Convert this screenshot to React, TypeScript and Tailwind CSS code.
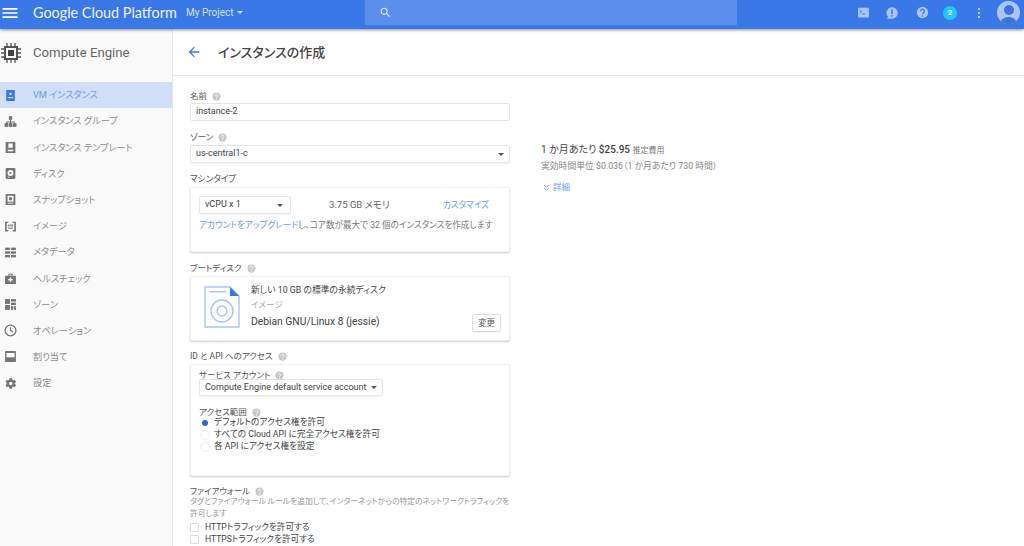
import React from "react";

const font = "font-['Roboto','Noto_Sans_CJK_JP',sans-serif] [font-feature-settings:'palt']";

function Help({ className = "" }: { className?: string }) {
  return (
    <svg viewBox="0 0 24 24" className={`w-[9px] h-[9px] shrink-0 ${className}`}>
      <circle cx="12" cy="12" r="11" fill="#c8c8c8" />
      <path d="M8.5 9.5a3.5 3.5 0 1 1 5.5 2.9c-1.2.8-2 1.4-2 2.8" fill="none" stroke="#fff" strokeWidth="2.4" />
      <circle cx="12" cy="18.5" r="1.5" fill="#fff" />
    </svg>
  );
}

function Caret({ className = "" }: { className?: string }) {
  return <span className={`w-0 h-0 border-x-[3.5px] border-x-transparent border-t-[3.5px] border-t-[#555] ${className}`} />;
}

const G = "#757575";
const navIcons: React.ReactNode[] = [
  <g key="a"><path d="M5 2h14a1 1 0 0 1 1 1v18a1 1 0 0 1-1 1H5a1 1 0 0 1-1-1V3a1 1 0 0 1 1-1z" fill="#3b78e7" /><rect x="10" y="7" width="4" height="4" fill="#d0dff7" /><rect x="7" y="15" width="10" height="2" fill="#d0dff7" /></g>,
  <g key="b" fill={G}><rect x="9" y="2" width="6" height="7" /><rect x="1" y="15" width="7" height="7" /><rect x="9" y="15" width="6" height="7" /><rect x="16" y="15" width="7" height="7" /><path d="M11 9h2v3h7v3h-2v-1h-5v1h-2v-1H6v1H4v-3h7z" /></g>,
  <g key="c"><rect x="3" y="2" width="18" height="20" rx="1" fill={G} /><rect x="8" y="4.5" width="8" height="8" fill="#fafafa" /><rect x="7" y="16" width="10" height="3" fill="#fafafa" /></g>,
  <g key="d"><rect x="3" y="2" width="18" height="20" rx="2" fill={G} /><circle cx="12" cy="11" r="5.5" fill="#fafafa" /><circle cx="12" cy="11" r="2" fill={G} /><rect x="7" y="18" width="3" height="1.5" fill="#fafafa" /></g>,
  <g key="e"><rect x="3" y="2" width="18" height="20" rx="1" fill={G} /><rect x="6.5" y="5" width="11" height="11" fill="#fafafa" /><circle cx="12" cy="10.5" r="3.2" fill={G} /><rect x="7" y="18" width="10" height="1.5" fill="#fafafa" /></g>,
  <g key="f" fill={G}><path d="M2 3h6v2.5H5v13h3V21H2zM16 3h6v18h-6v-2.5h3v-13h-3z" /><rect x="7" y="8.5" width="3" height="3" /><rect x="10.5" y="8.5" width="3" height="3" /><rect x="14" y="8.5" width="3" height="3" /><rect x="7.5" y="14" width="9" height="2" /></g>,
  <g key="g" fill={G}><rect x="2" y="3" width="9" height="4.5" /><rect x="13" y="3" width="9" height="4.5" /><rect x="2" y="9.8" width="9" height="4.5" /><rect x="13" y="9.8" width="9" height="4.5" /><rect x="2" y="16.5" width="9" height="4.5" /><rect x="13" y="16.5" width="9" height="4.5" /></g>,
  <g key="h"><path d="M8 7V3h8v4h6v15H2V7z" fill={G} /><rect x="10" y="5" width="4" height="2" fill="#fafafa" /><path d="M10.7 10h2.6v3h3v2.6h-3v3h-2.6v-3h-3V13h3z" fill="#fafafa" /></g>,
  <g key="i" fill={G}><rect x="2" y="2" width="9" height="9" /><rect x="13" y="2" width="9" height="4.5" /><rect x="13" y="8.5" width="9" height="4.5" /><rect x="2" y="13" width="9" height="9" /><rect x="13" y="15" width="4" height="7" /><rect x="18.5" y="15" width="3.5" height="7" /></g>,
  <g key="j"><circle cx="12" cy="12" r="10" fill="none" stroke={G} strokeWidth="2.4" /><path d="M12 6V12l4.5 2.5" fill="none" stroke={G} strokeWidth="2.2" /></g>,
  <g key="k"><rect x="2" y="2" width="20" height="20" rx="1" fill={G} /><rect x="4.5" y="5.5" width="15" height="8" fill="#fafafa" /></g>,
  <path key="l" fill={G} d="M19.9 13a8 8 0 0 0 0-2l2.4-1.8-2.3-4-2.8 1.1a8 8 0 0 0-1.8-1L15 2.4h-5l-.4 2.9a8 8 0 0 0-1.8 1L5 5.2l-2.3 4L5 11a8 8 0 0 0 0 2l-2.3 1.8 2.3 4 2.8-1.1a8 8 0 0 0 1.8 1l.4 2.9h5l.4-2.9a8 8 0 0 0 1.8-1l2.8 1.1 2.3-4zM12.5 15.2a3.2 3.2 0 1 1 0-6.4 3.2 3.2 0 0 1 0 6.4z" />,
];

const navItems = ["VM インスタンス", "インスタンス グループ", "インスタンス テンプレート", "ディスク", "スナップショット", "イメージ", "メタデータ", "ヘルスチェック", "ゾーン", "オペレーション", "割り当て", "設定"];

function Card({ className = "", children }: { className?: string; children: React.ReactNode }) {
  return <div className={`bg-white rounded-[2px] shadow-[0_1px_2px_rgba(0,0,0,0.2)] border border-[#f0f0f0] ${className}`}>{children}</div>;
}

function Label({ text, className = "" }: { text: string; className?: string }) {
  return (
    <div className={`flex items-center gap-[5px] text-[8.5px] leading-[12px] text-[#555] ${className}`}>
      <span>{text}</span>
      <Help />
    </div>
  );
}

function Radio({ on, label }: { on?: boolean; label: string }) {
  return (
    <div className="flex items-center gap-[4px] h-[12px]">
      <span className={`ml-[1px] w-[10px] h-[10px] rounded-full flex items-center justify-center ${on ? "" : "border border-[#eee]"}`}>
        {on && <span className="w-[6px] h-[6px] rounded-full bg-[#2f66d8]" />}
      </span>
      <span className="text-[#444] text-[8.7px]">{label}</span>
    </div>
  );
}

function Check({ label }: { label: string }) {
  return (
    <div className="flex items-center gap-[6px] h-[12px] text-[#444] text-[8.6px]">
      <span className="w-[9px] h-[9px] border border-[#ddd] rounded-[1px]" />
      <span>{label}</span>
    </div>
  );
}

export default function App() {
  return (
    <div className={`w-[1024px] h-[546px] overflow-hidden flex flex-col bg-white ${font}`}>
      <header className="relative z-10 h-[29px] shrink-0 bg-[#3b78e7] shadow-[0_1px_3px_rgba(0,0,0,0.45)] flex items-center pb-[4px] text-white">
        <svg viewBox="0 0 24 24" className="w-[20px] h-[20px] shrink-0"><path d="M3 6h18v2H3zm0 5h18v2H3zm0 5h18v2H3z" fill="#fff" /></svg>
        <span className="ml-[13px] text-[14.4px] w-[143px] font-['Lato',sans-serif] opacity-90 whitespace-nowrap">Google Cloud Platform</span>
        <span className="ml-[10px] text-[10px] text-[#cfe0fb] w-[46px] whitespace-nowrap">My Project</span>
        <span className="ml-[5px] w-0 h-0 border-x-[3px] border-x-transparent border-t-[3px] border-t-[#d5e3fb]" />
        <div className="ml-[122px] w-[372px] h-[25px] self-start bg-[#5c8fec] flex items-center pl-[14px]">
          <svg viewBox="0 0 24 24" className="w-[13px] h-[13px]"><path d="M15.5 14h-.79l-.28-.27A6.47 6.47 0 0 0 16 9.5 6.5 6.5 0 1 0 9.5 16c1.61 0 3.09-.59 4.23-1.57l.27.28v.79l5 4.99L20.49 19l-4.99-5zm-6 0C7.01 14 5 11.99 5 9.5S7.01 5 9.5 5 14 7.01 14 9.5 11.99 14 9.5 14z" fill="#d8e5fb" /></svg>
        </div>
        <div className="ml-auto flex items-center h-full">
          <svg viewBox="0 0 24 24" className="w-[13px] h-[13px]"><rect x="2" y="3" width="20" height="18" rx="1.5" fill="#a9c5f5" /><path d="M5 8l3.5 3L5 14" fill="none" stroke="#3b78e7" strokeWidth="1.8" /><rect x="10" y="14" width="5" height="1.8" fill="#3b78e7" /></svg>
          <svg viewBox="0 0 24 24" className="w-[14px] h-[14px] ml-[15.5px]"><path d="M12 2a10 10 0 0 1 0 20H3l2.5-3A10 10 0 0 1 12 2z" fill="#a9c5f5" /><rect x="10.7" y="6" width="2.6" height="8" fill="#3b78e7" /><rect x="10.7" y="15.5" width="2.6" height="2.6" fill="#3b78e7" /></svg>
          <svg viewBox="0 0 24 24" className="w-[13px] h-[13px] ml-[16.5px]"><circle cx="12" cy="12" r="10.5" fill="#a9c5f5" /><path d="M8.5 9.5a3.5 3.5 0 1 1 5.5 2.9c-1.2.8-2 1.4-2 2.8" fill="none" stroke="#3b78e7" strokeWidth="2.4" /><circle cx="12" cy="18.5" r="1.5" fill="#3b78e7" /></svg>
          <span className="ml-[14.5px] w-[14px] h-[14px] rounded-full bg-[#1ec8fb] text-[8px] font-bold flex items-center justify-center">2</span>
          <span className="ml-[21px] flex flex-col gap-[2px]">
            <i className="block w-[2px] h-[2px] bg-[#b9d0f7]" />
            <i className="block w-[2px] h-[2px] bg-[#b9d0f7]" />
            <i className="block w-[2px] h-[2px] bg-[#b9d0f7]" />
          </span>
          <span className="ml-[17px] mr-[4px] w-[23px] h-[23px] rounded-full bg-[#a9c5f5] relative overflow-hidden shrink-0">
            <span className="absolute left-[6.5px] top-[4px] w-[10px] h-[10px] rounded-full bg-[#3f74d6]" />
            <span className="absolute left-[3px] top-[16px] w-[17px] h-[10px] rounded-t-[8px] bg-[#3f74d6]" />
          </span>
        </div>
      </header>

      <div className="flex flex-1 min-h-0">
        <aside className="w-[173px] shrink-0 bg-[#fafafa] border-r border-[#e6e6e6] flex flex-col">
          <div className="h-[47px] shrink-0 flex items-center">
            <svg viewBox="0 0 24 24" className="w-[24px] h-[24px] ml-[-1px] shrink-0">
              <path fill="#555" d="M5 5h14v14H5z" />
              <path fill="#fafafa" d="M7 7h10v10H7z" />
              <path fill="#444" d="M9 9h6v6H9z" />
              <path stroke="#555" strokeWidth="1.3" d="M2 8h3M2 12h3M2 16h3M19 8h3M19 12h3M19 16h3M8 2v3M12 2v3M16 2v3M8 19v3M12 19v3M16 19v3" />
            </svg>
            <span className="ml-[10px] text-[13.2px] text-[#666]">Compute Engine</span>
          </div>
          <nav className="mt-[6px] text-[9.2px]">
            {navItems.map((t, i) => (
              <div key={t} className={`h-[26.2px] flex items-center ${i === 0 ? "bg-[#d0dff7] text-[#6d9bec]" : "text-[#8c8c8c]"}`}>
                <svg viewBox="0 0 24 24" className="w-[13px] h-[13px] ml-[4px] shrink-0">{navIcons[i]}</svg>
                <span className="ml-[16px]">{t}</span>
              </div>
            ))}
          </nav>
        </aside>

        <main className="flex-1 min-w-0 flex flex-col">
          <div className="h-[47px] shrink-0 border-b border-[#e8e8e8] flex items-center">
            <svg viewBox="0 0 24 24" className="w-[16px] h-[16px] ml-[13px]"><path d="M20 11H7.8l5.6-5.6L12 4l-8 8 8 8 1.4-1.4L7.8 13H20z" fill="#3b78e7" /></svg>
            <h1 className="ml-[16px] pt-[2px] text-[13px] font-medium text-[#444]">インスタンスの作成</h1>
          </div>

          <div className="flex pl-[17px] min-h-0">
            <div className="w-[320px] shrink-0 pt-[14px] text-[8.6px]">
              <Label text="名前" />
              <div className="mt-[1px] h-[18px] border border-[#e5e5e5] rounded-[2px] px-[5px] flex items-center text-[9px] text-[#444]">instance-2</div>
              <Label text="ゾーン" className="mt-[10px]" />
              <div className="mt-[2px] h-[18px] border border-[#e5e5e5] rounded-[2px] px-[5px] flex items-center justify-between text-[9px] text-[#444] shadow-[0_1px_1px_rgba(0,0,0,0.05)]">
                <span>us-central1-c</span>
                <Caret />
              </div>
              <div className="mt-[10px] leading-[12px] text-[#555]">マシンタイプ</div>
              <Card className="mt-[2px] h-[65px] px-[8px] pt-[8px]">
                <div className="flex items-center text-[#444]">
                  <div className="w-[92px] h-[18px] border border-[#e5e5e5] rounded-[2px] px-[5px] flex items-center justify-between text-[9px] shadow-[0_1px_1px_rgba(0,0,0,0.05)]">
                    <span>vCPU x 1</span>
                    <Caret className="mr-[2px]" />
                  </div>
                  <span className="ml-[38px] text-[#666] text-[9.5px]">3.75 GB メモリ</span>
                  <span className="ml-auto mr-[12px] text-[#6d9bec]">カスタマイズ</span>
                </div>
                <div className="mt-[5px] text-[#777] whitespace-nowrap"><span className="text-[#6d9bec]">アカウントをアップグレード</span>し、コア数が最大で 32 個のインスタンスを作成します</div>
              </Card>
              <Label text="ブートディスク" className="mt-[10px]" />
              <Card className="mt-[2px] h-[65px] flex pl-[13px] pr-[8px]">
                <svg viewBox="0 0 36 42" className="w-[36px] h-[42px] mt-[9px] shrink-0">
                  <path d="M1 1h25l9 9v31H1z" fill="#fff" stroke="#a9c5f5" strokeWidth="1.4" />
                  <path d="M26 1l9 9h-9z" fill="#3b78e7" />
                  <rect x="6" y="5" width="16" height="1.5" fill="#a9c5f5" />
                  <circle cx="18" cy="25" r="11" fill="none" stroke="#a9c5f5" strokeWidth="1.4" />
                  <circle cx="18" cy="25" r="5" fill="none" stroke="#a9c5f5" strokeWidth="1.4" />
                </svg>
                <div className="ml-[11px] pt-[6px] flex-1 min-w-0 relative">
                  <div className="text-[#444] leading-[14px] text-[8.8px]">新しい 10 GB の標準の永続ディスク</div>
                  <div className="mt-[1px] text-[#aaa] leading-[14px]">イメージ</div>
                  <div className="mt-[2px] text-[#444] leading-[16px] text-[10.3px] whitespace-nowrap">Debian GNU/Linux 8 (jessie)</div>
                  <span className="absolute right-0 bottom-[8px] w-[29px] h-[18px] border border-[#ddd] rounded-[2px] flex items-center justify-center text-[#555] shadow-[0_1px_1px_rgba(0,0,0,0.05)]">変更</span>
                </div>
              </Card>
              <Label text="ID と API へのアクセス" className="mt-[9px]" />
              <Card className="mt-[2px] h-[112px] px-[8px] pt-[4px]">
                <Label text="サービス アカウント" />
                <div className="mt-[-2px] w-[184px] h-[17px] border border-[#e5e5e5] rounded-[2px] px-[5px] flex items-center justify-between text-[9px] text-[#444] shadow-[0_1px_1px_rgba(0,0,0,0.05)] whitespace-nowrap">
                  <span>Compute Engine default service account</span>
                  <Caret />
                </div>
                <Label text="アクセス範囲" className="mt-[10px] mb-[-1px]" />
                <Radio on label="デフォルトのアクセス権を許可" />
                <Radio label="すべての Cloud API に完全アクセス権を許可" />
                <Radio label="各 API にアクセス権を設定" />
              </Card>
              <Label text="ファイアウォール" className="mt-[9px]" />
              <div className="mt-[-1px] text-[#999] leading-[12px] text-[7.8px]">タグとファイアウォール ルールを追加して、インターネットからの特定のネットワークトラフィックを許可します</div>
              <div className="mt-[1px]"><Check label="HTTPトラフィックを許可する" /></div>
              <Check label="HTTPSトラフィックを許可する" />
            </div>

            <div className="ml-[31px] pt-[67px]">
              <div className="text-[10px] leading-[14px] text-[#444] whitespace-nowrap">1 か月あたり <span className="font-medium">$25.95</span> <span className="text-[8px] text-[#777]">推定費用</span></div>
              <div className="mt-[2px] text-[8.8px] leading-[13px] text-[#888] whitespace-nowrap">実効時間単位 $0.036（1 か月あたり 730 時間）</div>
              <div className="mt-[8px] flex items-center gap-[3px] text-[8.5px] text-[#6d9bec]">
                <svg viewBox="0 0 12 12" className="w-[7px] h-[7px] ml-[2px] shrink-0"><path d="M2 2l4 3.5L10 2M2 7l4 3.5L10 7" fill="none" stroke="#3b78e7" strokeWidth="1.3" /></svg>
                <span>詳細</span>
              </div>
            </div>
          </div>
        </main>
      </div>
    </div>
  );
}
